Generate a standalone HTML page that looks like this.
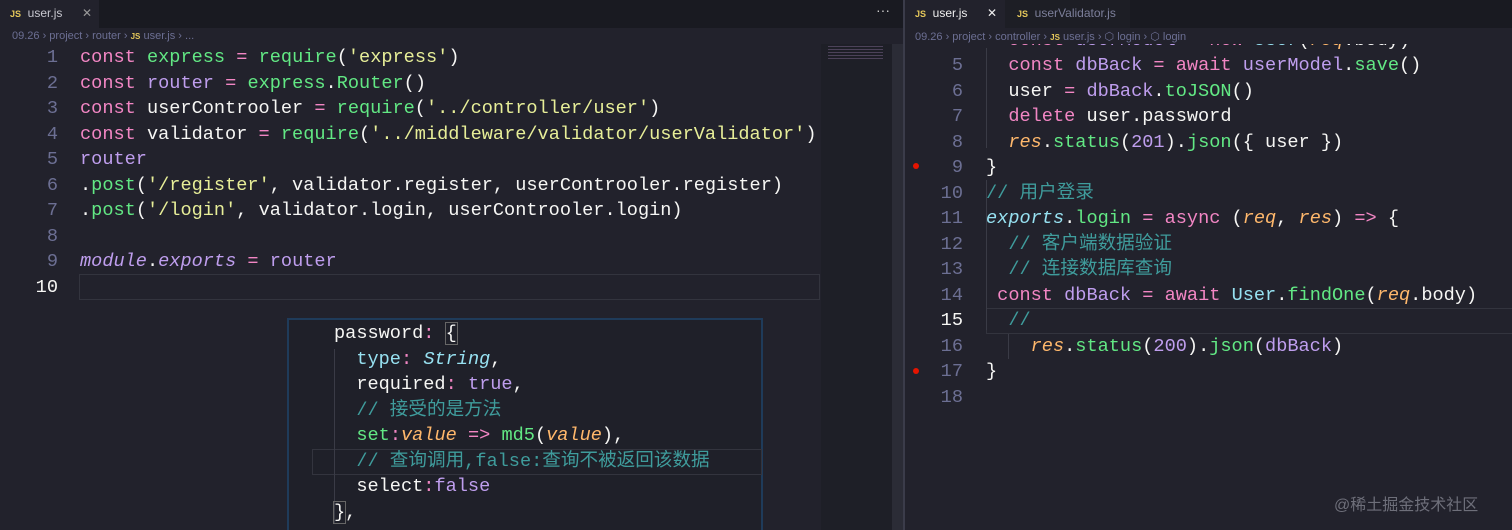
<!DOCTYPE html>
<html><head><meta charset="utf-8"><style>
*{margin:0;padding:0;box-sizing:border-box}
body{width:1512px;height:530px;overflow:hidden;background:#22222c;font-family:"Liberation Mono","Noto Sans CJK SC",monospace;position:relative}
.ui{font-family:"Liberation Sans","Noto Sans CJK SC",sans-serif}
.abs{position:absolute}
.ln{position:absolute;font-size:18.6px;line-height:25.5px;white-space:pre;color:#f6f6f4}
.num{position:absolute;font-size:18.6px;line-height:25.5px;color:#6c6f93;text-align:right;width:40px}
.k{color:#f286c4}.g{color:#62e884}.p{color:#bf9eee}.s{color:#e7ee98}.c{color:#3f9c9c}.cy{color:#97e1f1}.o{color:#ffb86c}.i{font-style:italic}
</style></head><body>
<!-- left tab bar -->
<div class="abs" style="left:0;top:0;width:903px;height:28px;background:#191a21"></div>
<div class="abs ui" style="left:0;top:0;width:99px;height:28px;background:#22222c;font-size:12px;color:#c8c8d0;line-height:26px;padding-left:10px"><b style="color:#e5c85a;font-size:9px">JS</b>&nbsp; user.js <span style="position:absolute;left:82px;color:#999">✕</span></div>
<div class="abs ui" style="left:876px;top:2px;color:#ccc;font-size:14px">···</div>
<div class="abs ui" style="left:12px;top:30px;font-size:11px;color:#6c6f93">09.26 › project › router › <b style="color:#e5c85a;font-size:8px">JS</b> user.js › ...</div>
<!-- minimap -->
<div class="abs" style="left:821px;top:44px;width:71px;height:486px;background:#1e1f27"></div>
<div class="abs" style="left:892px;top:44px;width:11px;height:486px;background:#2b2c36"></div>
<div class="abs" style="left:828px;top:46px;width:55px;height:14px;background:repeating-linear-gradient(#6a5a7a 0 1px,transparent 1px 3px);opacity:.6"></div>
<!-- left line 10 highlight -->
<div class="abs" style="left:79px;top:274px;width:741px;height:26px;border:1px solid #33343e"></div>
<div class="num" style="left:18px;top:45px">1<br>2<br>3<br>4<br>5<br>6<br>7<br>8<br>9<br><span style="color:#f6f6f4">10</span></div>
<div class="ln" style="left:80px;top:45px"><span class="k">const</span> <span class="g">express</span> <span class="k">=</span> <span class="g">require</span>(<span class="s">'express'</span>)
<span class="k">const</span> <span class="p">router</span> <span class="k">=</span> <span class="g">express</span>.<span class="g">Router</span>()
<span class="k">const</span> userControoler <span class="k">=</span> <span class="g">require</span>(<span class="s">'../controller/user'</span>)
<span class="k">const</span> validator <span class="k">=</span> <span class="g">require</span>(<span class="s">'../middleware/validator/userValidator'</span>)
<span class="p">router</span>
.<span class="g">post</span>(<span class="s">'/register'</span>, validator.register, userControoler.register)
.<span class="g">post</span>(<span class="s">'/login'</span>, validator.login, userControoler.login)

<span class="p i">module</span>.<span class="p i">exports</span> <span class="k">=</span> <span class="p">router</span></div>
<!-- popup -->
<div class="abs" style="left:287px;top:318px;width:476px;height:212px;background:#1f2029;border:2px solid #1f3b5a;border-bottom:none"></div>
<div class="abs" style="left:312px;top:449px;width:450px;height:26px;border:1px solid #33343e"></div>
<div class="abs" style="left:334px;top:349px;width:1px;height:175px;background:#3a3b46"></div>
<div class="ln" style="left:334px;top:321px">password<span class="k">:</span> <span style="outline:1px solid #666">{</span>
  <span class="cy">type</span><span class="k">:</span> <span class="cy i">String</span>,
  required<span class="k">:</span> <span class="p">true</span>,
  <span class="c">// 接受的是方法</span>
  <span class="g">set</span><span class="k">:</span><span class="o i">value</span> <span class="k">=&gt;</span> <span class="g">md5</span>(<span class="o i">value</span>),
  <span class="c">// 查询调用,false:查询不被返回该数据</span>
  select<span class="k">:</span><span class="p">false</span>
<span style="outline:1px solid #666">}</span>,</div>
<!-- divider -->
<div class="abs" style="left:903px;top:0;width:2px;height:530px;background:#3b3c4a"></div>
<!-- right tabs -->
<div class="abs" style="left:905px;top:0;width:607px;height:28px;background:#191a21"></div>
<div class="abs ui" style="left:905px;top:0;width:100px;height:28px;background:#22222c;font-size:12px;color:#f0f0f0;line-height:26px;padding-left:10px"><b style="color:#e5c85a;font-size:9px">JS</b>&nbsp; user.js <span style="position:absolute;left:82px;color:#eee">✕</span></div>
<div class="abs ui" style="left:1005px;top:0;width:125px;height:28px;background:#1d1e25;font-size:12px;color:#7c7f9a;line-height:26px;padding-left:12px"><b style="color:#e5c85a;font-size:9px">JS</b>&nbsp; userValidator.js</div>
<div class="abs ui" style="left:915px;top:30px;font-size:11px;color:#6c6f93">09.26 › project › controller › <b style="color:#e5c85a;font-size:8px">JS</b> user.js › ⬡ login › ⬡ login</div>
<div class="abs" style="left:986px;top:308px;width:526px;height:26px;border:1px solid #33343e;border-right:none"></div>
<div class="abs" style="left:986px;top:48px;width:1px;height:100px;background:#3a3b46"></div>
<div class="abs" style="left:986px;top:180px;width:1px;height:150px;background:#3a3b46"></div>
<div class="abs" style="left:1008px;top:334px;width:1px;height:25px;background:#3a3b46"></div>
<div class="abs" style="left:913px;top:163px;width:6px;height:6px;border-radius:50%;background:#e51400"></div>
<div class="abs" style="left:913px;top:368px;width:6px;height:6px;border-radius:50%;background:#e51400"></div>
<div class="num" style="left:923px;top:53px">5<br>6<br>7<br>8<br>9<br>10<br>11<br>12<br>13<br>14<br><span style="color:#f6f6f4">15</span><br>16<br>17<br>18</div>
<div class="abs" style="left:905px;top:44px;width:607px;height:10px;overflow:hidden">
<div class="ln" style="left:81px;top:-16.5px">  <span class="k">const</span> <span class="p">userModel</span> <span class="k">=</span> <span class="k">new</span> <span class="cy">User</span>(<span class="o i">req</span>.body)</div>
</div>
<div class="ln" style="left:986px;top:53px">  <span class="k">const</span> <span class="p">dbBack</span> <span class="k">=</span> <span class="k">await</span> <span class="p">userModel</span>.<span class="g">save</span>()
  user <span class="k">=</span> <span class="p">dbBack</span>.<span class="g">toJSON</span>()
  <span class="k">delete</span> user.password
  <span class="o i">res</span>.<span class="g">status</span>(<span class="p">201</span>).<span class="g">json</span>({ user })
}
<span class="c">// 用户登录</span>
<span class="cy i">exports</span>.<span class="g">login</span> <span class="k">=</span> <span class="k">async</span> (<span class="o i">req</span>, <span class="o i">res</span>) <span class="k">=&gt;</span> {
  <span class="c">// 客户端数据验证</span>
  <span class="c">// 连接数据库查询</span>
 <span class="k">const</span> <span class="p">dbBack</span> <span class="k">=</span> <span class="k">await</span> <span class="cy">User</span>.<span class="g">findOne</span>(<span class="o i">req</span>.body)
  <span class="c">//</span>
    <span class="o i">res</span>.<span class="g">status</span>(<span class="p">200</span>).<span class="g">json</span>(<span class="p">dbBack</span>)
}
</div>
<div class="abs ui" style="left:1334px;top:491px;font-size:16px;color:#6e6f7a">@稀土掘金技术社区</div>
</body></html>
